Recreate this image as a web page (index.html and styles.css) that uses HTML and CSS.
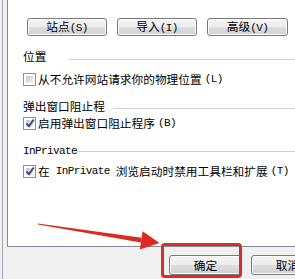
FILE: index.html
```html
<!DOCTYPE html>
<html lang="zh-CN">
<head>
    <meta charset="UTF-8">
    <title>Internet 选项</title>
    <link rel="stylesheet" href="styles.css">
</head>
<body>
<div class="dialog">
    <div class="panel">
        <div class="btn-row">
            <button class="btn">站点<span class="key">(S)</span></button>
            <button class="btn">导入<span class="key">(I)</span></button>
            <button class="btn last">高级<span class="key">(V)</span></button>
        </div>

        <div class="group g-loc"><span>位置</span><i class="rule"></i></div>
        <div class="check c-loc"><span class="box"></span>从不允许网站请求你的物理位置<span class="key sp">(L)</span></div>

        <div class="group g-pop"><span>弹出窗口阻止程</span><i class="rule"></i></div>
        <div class="check c-pop"><span class="box on"></span>启用弹出窗口阻止程序<span class="key sp">(B)</span></div>

        <div class="group g-priv"><span class="lat">InPrivate</span><i class="rule"></i></div>
        <div class="check c-priv"><span class="box on"></span>在<span class="lat"> InPrivate </span>浏览启动时禁用工具栏和扩展<span class="key sp">(T)</span></div>
    </div>

    <div class="footer">
        <button class="btn wide">确定</button>
        <button class="btn wide">取消</button>
    </div>

    <!-- 标注:红色箭头和方框 -->
    <svg class="arrow" width="295" height="279" viewBox="0 0 295 279">
        <polygon points="38,223.6 141.6,237.8 140.9,242.6 38,224.6" fill="#dc2a22"/>
        <polygon points="142.6,231.2 159.5,243 139.8,249.4" fill="#dc2a22"/>
    </svg>
    <div class="highlight"></div>
</div>
</body>
</html>
```

FILE: styles.css
```css
html, body {
    margin: 0;
    padding: 0;
}
body {
    width: 295px;
    height: 279px;
    overflow: hidden;
    background: #f0f0f0;
    font-family: "Noto Sans CJK SC", "Liberation Sans", sans-serif;
    font-size: 11.7px;
    color: #000;
}
.dialog {
    position: relative;
    height: 279px;
    margin-left: 2px;
    border-left: 1px solid #a3a6ad;
    padding-left: 4px;
}
.panel {
    width: 300px;
    height: 247px;
    background: #fff;
    border-left: 1px solid #868a93;
    border-bottom: 1px solid #868a93;
    padding-left: 15px;
    box-sizing: border-box;
    padding-top: 18px;
}
.lat, .key {
    font-family: "Liberation Mono", monospace;
    font-size: 11px;
    letter-spacing: -0.6px;
    white-space: pre;
}
.key.sp {
    padding-left: 3px;
}
.btn {
    height: 18px;
    width: 80px;
    padding: 0;
    margin: 0;
    border: 1px solid #7a7a7a;
    border-radius: 3px;
    background: linear-gradient(#f4f4f4 0%, #ececec 48%, #dedede 52%, #d0d0d0 100%);
    box-shadow: inset 0 0 0 1px #fbfbfb;
    font-family: inherit;
    font-size: 11.7px;
    line-height: 14px;
    color: #000;
    flex-shrink: 0;
}
.btn-row {
    display: flex;
    gap: 10px;
    margin-left: 4px;
    height: 18px;
}
.btn.last {
    width: 81px;
}
.group {
    display: flex;
    align-items: center;
    height: 14px;
    line-height: 14px;
    white-space: nowrap;
}
.rule {
    flex: 1;
    height: 0;
    border-top: 1px solid #cdd3d8;
}
.g-loc { margin-top: 13px; }
.g-loc .rule { margin-left: 23px; position: relative; top: 3px; }
.g-pop { margin-top: 13px; }
.g-pop .rule { margin-left: 8px; position: relative; top: 2px; }
.g-priv { margin-top: 14px; }
.g-priv .rule { position: relative; top: 0; }
.check {
    display: flex;
    align-items: center;
    height: 14px;
    line-height: 14px;
    white-space: nowrap;
}
.c-loc { margin-top: 9px; }
.c-pop { margin-top: 3px; }
.c-priv { margin-top: 6px; }
.box {
    width: 13px;
    height: 13px;
    box-sizing: border-box;
    border: 1px solid #8e8f8f;
    background: #fff;
    padding: 2px;
    margin-right: 2px;
    position: relative;
    flex-shrink: 0;
}
.box::before {
    content: '';
    display: block;
    width: 7px;
    height: 7px;
    background: linear-gradient(135deg, #c6c9cd, #f3f3f3);
}
.box.on::after {
    content: '';
    position: absolute;
    left: 1px;
    top: 0;
    width: 10px;
    height: 10px;
    background: url("data:image/svg+xml;utf8,<svg xmlns='http://www.w3.org/2000/svg' width='10' height='10'><path d='M1.5 5.5 L4 8.2 L8.8 1.5' fill='none' stroke='%23394e8c' stroke-width='2'/></svg>") no-repeat;
}
.footer {
    display: flex;
    gap: 9px;
    padding-left: 162px;
    padding-top: 8px;
    white-space: nowrap;
}
.btn.wide {
    width: 73px;
    height: 20px;
}
.arrow {
    position: absolute;
    left: -3px;
    top: 0;
    pointer-events: none;
}
.highlight {
    position: absolute;
    left: 158px;
    top: 243px;
    width: 81px;
    height: 35px;
    box-sizing: border-box;
    border: 3px solid #d3302c;
    border-radius: 4px;
}
```
